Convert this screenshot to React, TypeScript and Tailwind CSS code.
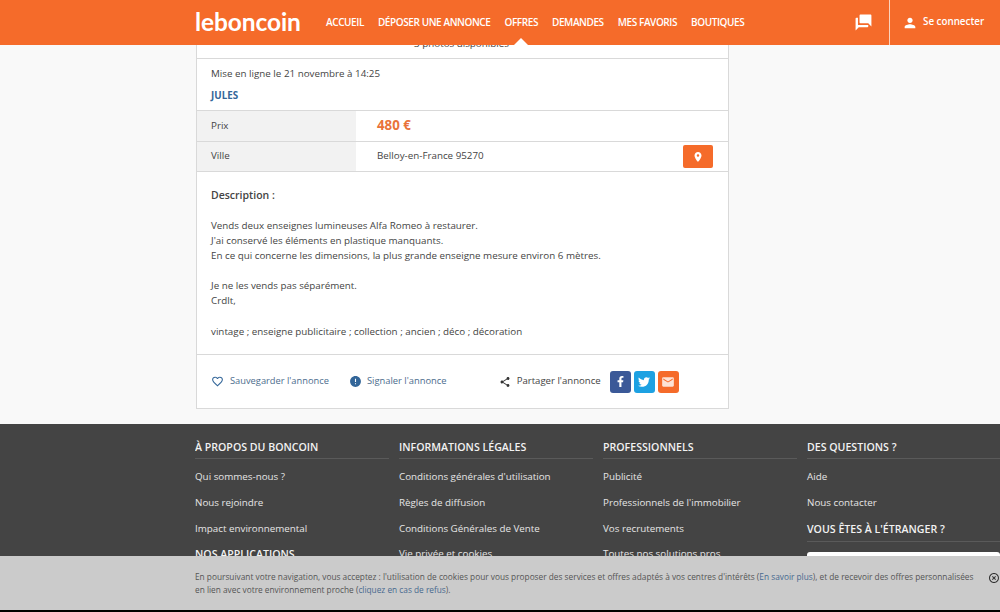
import { FaFacebookF, FaTwitter } from "react-icons/fa";
import {
  MdEmail,
  MdError,
  MdFavoriteBorder,
  MdHighlightOff,
  MdPerson,
  MdPlace,
  MdQuestionAnswer,
  MdShare,
} from "react-icons/md";

const navItems = ["ACCUEIL", "DÉPOSER UNE ANNONCE", "OFFRES", "DEMANDES", "MES FAVORIS", "BOUTIQUES"];

const footerColumns = [
  {
    title: "À PROPOS DU BONCOIN",
    links: ["Qui sommes-nous ?", "Nous rejoindre", "Impact environnemental"],
    next: "NOS APPLICATIONS",
  },
  {
    title: "INFORMATIONS LÉGALES",
    links: ["Conditions générales d'utilisation", "Règles de diffusion", "Conditions Générales de Vente", "Vie privée et cookies"],
  },
  {
    title: "PROFESSIONNELS",
    links: ["Publicité", "Professionnels de l'immobilier", "Vos recrutements", "Toutes nos solutions pros"],
  },
];

const FooterTitle = ({ children }: { children: string }) => (
  <h3 className="h-[35px] border-b border-[#5a5a5a] pt-[15px] text-[10.6px] leading-[17px] font-semibold text-[#f2f2f2]">{children}</h3>
);

const App = () => {
  return (
    <div className="relative h-[612px] overflow-hidden bg-[#f9f9f9] font-['Open_Sans',sans-serif] text-[9.8px] text-[#444]">
      {/* Header */}
      <header className="absolute top-0 right-0 left-0 z-20 flex h-[45px] bg-[#f56b2a] text-white">
        <div className="ml-[195px] flex flex-1 items-center">
          <span className="w-[131px] pb-[1px] font-['Lato',sans-serif] text-[24.5px] leading-none font-bold tracking-[-0.1px]">leboncoin</span>
          <nav className="flex gap-[14px] text-[10px] font-semibold tracking-[-0.41px]">
            {navItems.map((item) => (
              <a key={item} className="relative">
                {item}
                {item === "OFFRES" && (
                  <span className="absolute top-[23px] left-[10px] h-0 w-0 border-x-[7px] border-b-[7px] border-x-transparent border-b-white" />
                )}
              </a>
            ))}
          </nav>
          <MdQuestionAnswer className="mr-[16px] ml-auto h-[19px] w-[19px] -scale-x-100" />
        </div>
        <div className="flex w-[111px] items-center border-l border-[#fbd3bd] pl-[12px] text-[9.8px] font-semibold">
          <MdPerson className="mr-[5px] h-[16px] w-[16px]" />
          Se connecter
        </div>
      </header>

      {/* Annonce */}
      <main className="ml-[196px] w-[533px] border-x border-b border-[#d9d9d9] bg-white">
        <div className="flex h-[59px] items-end justify-center border-b border-[#d9d9d9] pr-[2px] pb-[6px]">3 photos disponibles</div>
        <div className="h-[51px] px-[14px] pt-[7px]">
          <p className="leading-[15px]">Mise en ligne le 21 novembre à 14:25</p>
          <p className="mt-[7px] leading-[15px] font-bold text-[#369]">JULES</p>
        </div>
        <div className="flex h-[31px] items-center border-t border-[#d9d9d9]">
          <div className="flex h-full w-[159px] items-center bg-[#f2f2f2] pl-[14px]">Prix</div>
          <div className="pl-[21px] text-[13.3px] font-bold text-[#e9733a]">480 €</div>
        </div>
        <div className="flex h-[31px] items-center border-y border-[#d9d9d9]">
          <div className="flex h-full w-[159px] items-center bg-[#f2f2f2] pl-[14px]">Ville</div>
          <div className="pl-[21px]">Belloy-en-France 95270</div>
          <button className="mr-[15px] ml-auto flex h-[23px] w-[30px] items-center justify-center rounded-[2px] bg-[#f56b2a] text-white">
            <MdPlace className="h-[12px] w-[12px]" />
          </button>
        </div>
        <div className="h-[183px] border-b border-[#d9d9d9] px-[14px] pt-[16px] leading-[15.1px]">
          <p className="text-[10.5px] font-semibold">Description :</p>
          <p className="mt-[15px]">
            Vends deux enseignes lumineuses Alfa Romeo à restaurer.
            <br />
            J'ai conservé les éléments en plastique manquants.
            <br />
            En ce qui concerne les dimensions, la plus grande enseigne mesure environ 6 mètres.
          </p>
          <p className="mt-[15px]">
            Je ne les vends pas séparément.
            <br />
            Crdlt,
          </p>
          <p className="mt-[15px]">vintage ; enseigne publicitaire ; collection ; ancien ; déco ; décoration</p>
        </div>
        <div className="flex h-[53px] items-center pl-[14px]">
          <MdFavoriteBorder className="mr-[6px] h-[13px] w-[13px] text-[#336699]" />
          <span className="mb-[1px] text-[9.3px] text-[#4d6d8e]">Sauvegarder l'annonce</span>
          <MdError className="mr-[5px] ml-[20px] h-[13px] w-[13px] text-[#336699]" />
          <span className="mb-[1px] text-[9.4px] text-[#4d6d8e]">Signaler l'annonce</span>
          <MdShare className="mr-[6px] ml-[52px] h-[12px] w-[12px] text-[#333]" />
          <span className="mb-[1px] text-[9.6px]">Partager l'annonce</span>
          <div className="ml-[9px] flex gap-[3px] text-white">
            <span className="flex h-[22px] w-[21px] items-center justify-center rounded-[3px] bg-[#3b5998]"><FaFacebookF className="h-[11px] w-[11px]" /></span>
            <span className="flex h-[22px] w-[21px] items-center justify-center rounded-[3px] bg-[#1da1e2]"><FaTwitter className="h-[12px] w-[12px]" /></span>
            <span className="flex h-[22px] w-[21px] items-center justify-center rounded-[3px] bg-[#f56b2a]"><MdEmail className="h-[14px] w-[14px] text-[#fde3d5]" /></span>
          </div>
        </div>
      </main>

      {/* Footer */}
      <footer className="mt-[15px] h-[200px] bg-[#444] text-[9.8px] text-[#e6e6e6]">
        <div className="ml-[195px] grid grid-cols-[204px_204px_204px_193px] overflow-hidden">
          {footerColumns.map((col) => (
            <div key={col.title} className="w-[194px]">
              <FooterTitle>{col.title}</FooterTitle>
              <ul className="mt-[6px]">
                {col.links.map((link) => (
                  <li key={link} className="flex h-[25.6px] items-center">{link}</li>
                ))}
              </ul>
              {col.next && <p className="mt-[5px] text-[10.6px] font-semibold text-[#f2f2f2]">{col.next}</p>}
            </div>
          ))}
          <div>
            <FooterTitle>DES QUESTIONS ?</FooterTitle>
            <ul className="mt-[6px]">
              <li className="flex h-[25.6px] items-center">Aide</li>
              <li className="flex h-[25.6px] items-center">Nous contacter</li>
            </ul>
            <h3 className="mt-[2px] h-[24px] border-b border-[#5a5a5a] text-[10.6px] leading-[22px] font-semibold text-[#f2f2f2]">VOUS ÊTES À L'ÉTRANGER ?</h3>
            <div className="mt-[10px] h-[30px] rounded-[3px] bg-white" />
          </div>
        </div>
      </footer>

      {/* Bandeau cookies */}
      <div className="absolute right-0 bottom-[2px] left-0 z-10 flex h-[54px] bg-[#cbcbcb] pt-[15px] pl-[195px] text-[8.3px] leading-[12.5px] text-[#555]">
        <p className="w-[785px]">
          En poursuivant votre navigation, vous acceptez : l'utilisation de cookies pour vous proposer des services et offres adaptés à vos centres d'intérêts (<span className="text-[#47698f]">En savoir plus</span>), et de recevoir des offres personnalisées en lien avec votre environnement proche (<span className="text-[#47698f]">cliquez en cas de refus</span>).
        </p>
        <MdHighlightOff className="mt-[1px] ml-[9px] h-[12px] w-[12px] text-[#333]" />
      </div>
      <div className="absolute right-0 bottom-0 left-0 h-[2px] bg-black" />
    </div>
  );
};

export default App;
